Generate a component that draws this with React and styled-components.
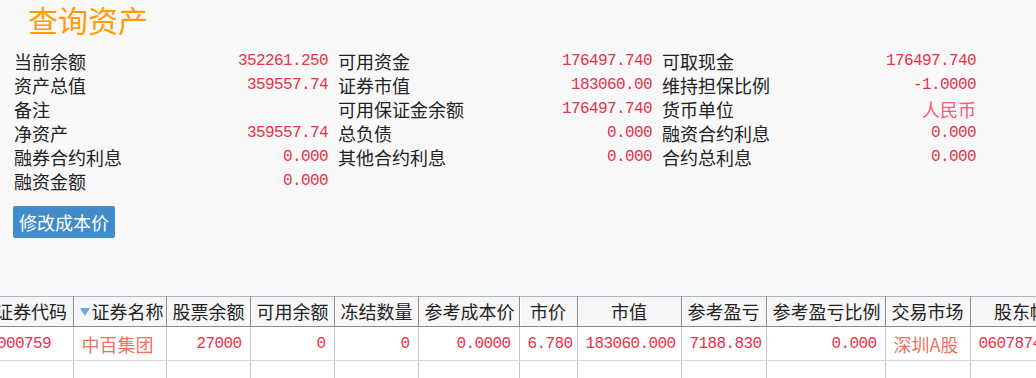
import React from "react";
import styled, { createGlobalStyle } from "styled-components";

const GlobalStyle = createGlobalStyle`
  html, body {
    margin: 0;
    padding: 0;
    background: #f8f8f8;
    font-family: "Noto Sans CJK SC", "Liberation Sans", sans-serif;
    color: #222;
    overflow: hidden;
  }
`;

const Page = styled.div`
  width: 1036px;
  height: 378px;
  overflow: hidden;
  background: #f8f8f8;
`;

const Title = styled.h1`
  margin: 0 0 0 28px;
  font-size: 30px;
  line-height: 38px;
  font-weight: 400;
  color: #ff9c00;
`;

const InfoGrid = styled.div`
  display: grid;
  grid-template-columns: repeat(3, 314px);
  grid-auto-rows: 24px;
  column-gap: 10px;
  margin: 11px 0 0 14px;
`;

const InfoItem = styled.div`
  display: flex;
  justify-content: space-between;
  align-items: center;
  font-size: 18px;
  line-height: 24px;
  white-space: nowrap;
`;

const Label = styled.span`
  color: #222;
`;

const Value = styled.span`
  color: ${(p) => (p.$text ? "#f0607a" : "#ea3148")};
  font-family: ${(p) =>
    p.$text
      ? `"Noto Sans CJK SC", sans-serif`
      : `"Liberation Mono", "Noto Sans CJK SC", monospace`};
  font-size: ${(p) => (p.$text ? "18px" : "16px")};
  letter-spacing: ${(p) => (p.$text ? "0" : "-0.6px")};
`;

const Button = styled.button`
  display: block;
  margin: 13px 0 0 13px;
  height: 32px;
  padding: 0 6px;
  border: none;
  border-radius: 2px;
  background: #428bca;
  color: #fff;
  font-family: "Noto Sans CJK SC", sans-serif;
  font-size: 18px;
  line-height: 32px;
  cursor: pointer;
`;

const TableWrap = styled.div`
  margin-top: 58px;
  width: 1036px;
  overflow: hidden;
  background: #fff;
`;

const Table = styled.table`
  margin-left: -11px;
  width: 1101px;
  table-layout: fixed;
  border-collapse: collapse;
  font-size: 18px;
  white-space: nowrap;
`;

const HeadCell = styled.th`
  height: 29px;
  padding: 0 6px;
  font-weight: 400;
  text-align: center;
  color: #222;
  background: #f6f6f6;
  border-top: 1px solid #a8b6ca;
  border-bottom: 1px solid #8a8a8a;
  border-right: 1px solid #8e8e8e;
  box-shadow: inset 1px 0 0 #fff;
  line-height: 29px;
  overflow: hidden;
`;

const Cell = styled.td`
  height: 33px;
  padding: 0 8px;
  text-align: ${(p) => p.$align || "right"};
  color: ${(p) => (p.$text ? "#f2705e" : "#ea3148")};
  font-family: ${(p) =>
    p.$text
      ? `"Noto Sans CJK SC", sans-serif`
      : `"Liberation Mono", "Noto Sans CJK SC", monospace`};
  font-size: ${(p) => (p.$text ? "18px" : "16px")};
  letter-spacing: ${(p) => (p.$text ? "0" : "-0.6px")};
  border-right: 1px solid #c8c8c8;
  border-bottom: 1px solid #d4d4d4;
  overflow: hidden;
`;

const SortArrow = styled.span`
  display: inline-block;
  width: 0;
  height: 0;
  margin-right: 2px;
  vertical-align: middle;
  border-left: 5px solid transparent;
  border-right: 5px solid transparent;
  border-top: 8px solid #69a8e4;
  position: relative;
  top: -2px;
`;

const info = [
  ["当前余额", "352261.250"],
  ["可用资金", "176497.740"],
  ["可取现金", "176497.740"],
  ["资产总值", "359557.74"],
  ["证券市值", "183060.00"],
  ["维持担保比例", "-1.0000"],
  ["备注", ""],
  ["可用保证金余额", "176497.740"],
  ["货币单位", "人民币", true],
  ["净资产", "359557.74"],
  ["总负债", "0.000"],
  ["融资合约利息", "0.000"],
  ["融券合约利息", "0.000"],
  ["其他合约利息", "0.000"],
  ["合约总利息", "0.000"],
  ["融资金额", "0.000"],
];

const columns = [
  { title: "证券代码", width: 84 },
  { title: "证券名称", width: 93, sort: true },
  { title: "股票余额", width: 84 },
  { title: "可用余额", width: 84 },
  { title: "冻结数量", width: 84 },
  { title: "参考成本价", width: 101 },
  { title: "市价", width: 58 },
  { title: "市值", width: 104 },
  { title: "参考盈亏", width: 85 },
  { title: "参考盈亏比例", width: 119 },
  { title: "交易市场", width: 85 },
  { title: "股东帐号", width: 120 },
];

const row = [
  { v: "000759", align: "left" },
  { v: "中百集团", align: "left", text: true },
  { v: "27000" },
  { v: "0" },
  { v: "0" },
  { v: "0.0000" },
  { v: "6.780" },
  { v: "183060.000" },
  { v: "7188.830" },
  { v: "0.000" },
  { v: "深圳A股", align: "left", text: true },
  { v: "0607874123", align: "left" },
];

export default function App() {
  return (
    <Page>
      <GlobalStyle />
      <Title>查询资产</Title>
      <InfoGrid>
        {info.map(([label, value, text]) => (
          <InfoItem key={label}>
            <Label>{label}</Label>
            <Value $text={text}>{value}</Value>
          </InfoItem>
        ))}
      </InfoGrid>
      <Button>修改成本价</Button>
      <TableWrap>
        <Table>
          <colgroup>
            {columns.map((c) => (
              <col key={c.title} style={{ width: c.width }} />
            ))}
          </colgroup>
          <thead>
            <tr>
              {columns.map((c) => (
                <HeadCell key={c.title}>
                  {c.sort && <SortArrow />}
                  {c.title}
                </HeadCell>
              ))}
            </tr>
          </thead>
          <tbody>
            <tr>
              {row.map((c, i) => (
                <Cell key={i} $align={c.align} $text={c.text}>
                  {c.v}
                </Cell>
              ))}
            </tr>
            <tr>
              {row.map((c, i) => (
                <Cell key={i} />
              ))}
            </tr>
          </tbody>
        </Table>
      </TableWrap>
    </Page>
  );
}
